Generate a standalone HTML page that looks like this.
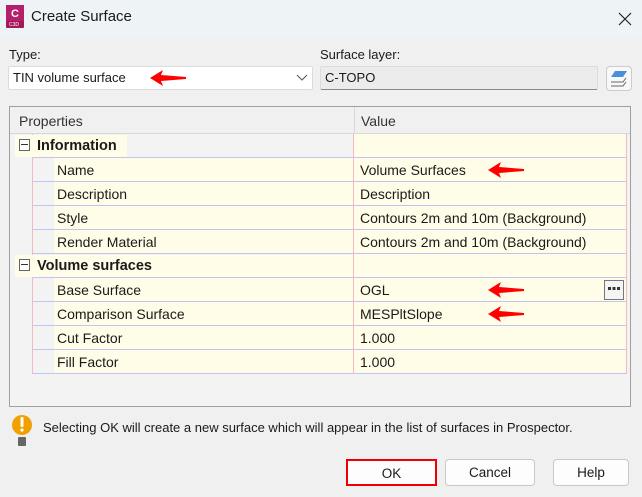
<!DOCTYPE html>
<html><head><meta charset="utf-8"><style>
*{margin:0;padding:0;box-sizing:border-box}
body{width:642px;height:497px;background:#f0f0f0;font-family:"Liberation Sans",sans-serif;font-size:14px;color:#1a1a1a;position:relative;overflow:hidden}
.a{position:absolute}
.title{left:0;top:0;width:642px;height:38px;background:#eef3f6}
.grid{left:9px;top:106px;width:622px;height:301px;border:1px solid #a0a0a0;background:#f3f3f3}
.row{position:absolute;left:0;height:24px;width:620px}
.t{position:absolute;top:4px;white-space:nowrap}
.arrow{position:absolute;width:36px;height:16px}
.btn{position:absolute;top:459px;height:27px;background:#fdfdfd;border:1px solid #c8c8c8;border-radius:4px;text-align:center;line-height:25px;font-size:13.5px}
</style></head><body>
<div class="a title"></div>
<svg class="a" style="left:6px;top:5px" width="18" height="23"><rect x="0" y="0" width="18" height="23" rx="1" fill="#a3195b"/><rect x="0" y="0" width="18" height="16" fill="#b5206a"/><text x="5" y="12" font-family="Liberation Sans" font-weight="bold" font-size="11" fill="#fff">C</text><text x="3" y="21" font-family="Liberation Sans" font-size="5" fill="#fff">C3D</text></svg>
<div class="a" style="left:31px;top:8px;font-size:15px">Create Surface</div>
<svg class="a" style="left:618px;top:12px" width="14" height="14"><path d="M1 1L13 13M13 1L1 13" stroke="#222" stroke-width="1.2"/></svg>
<div class="a" style="left:9px;top:47px;font-size:13px">Type:</div>
<div class="a" style="left:320px;top:47px;font-size:13px">Surface layer:</div>
<div class="a" style="left:8px;top:66px;width:305px;height:24px;background:#fff;border:1px solid #dcdcdc;border-radius:2px"></div>
<div class="a" style="left:13px;top:70px;font-size:13px">TIN volume surface</div>
<svg class="a" style="left:296px;top:74px" width="12" height="8"><path d="M1 1L6 6L11 1" fill="none" stroke="#555" stroke-width="1"/></svg>
<svg class="arrow" style="left:150px;top:70px"><path d="M0 8L13 0L11 5L36 7L36 9L11 11L13 16Z" fill="#f00"/></svg>
<div class="a" style="left:320px;top:66px;width:278px;height:24px;background:#ececec;border:1px solid #dcdcdc;border-bottom:1px solid #888;border-radius:2px"></div>
<div class="a" style="left:325px;top:70px;font-size:13px">C-TOPO</div>
<div class="a" style="left:606px;top:66px;width:26px;height:25px;background:#f8f8f8;border:1px solid #ccc;border-radius:4px"></div>
<svg class="a" style="left:609px;top:69px" width="20" height="20"><path d="M6 2H18L14 8H2Z" fill="#4a90d9"/><path d="M17 9L14 13H2" fill="none" stroke="#666" stroke-width="1"/><path d="M17 13L14 17H2" fill="none" stroke="#666" stroke-width="1"/></svg>

<div class="a grid">
<div class="row" style="top:0;height:27px;background:#f0f0f0;border-bottom:1px solid #d8d8d8"><div class="t" style="left:9px;top:6px;color:#333">Properties</div><div class="a" style="left:344px;top:0;width:1px;height:27px;background:#d8d8d8"></div><div class="t" style="left:351px;top:6px;color:#333">Value</div></div>
</div>

<div class="a" style="left:32px;top:134px;width:1px;height:240px;background:#f4b8c0"></div>
<div class="a" style="left:626px;top:134px;width:1px;height:240px;background:#f4b8c0"></div>

<div class="a" style="left:15px;top:135px;width:112px;height:22px;background:#fffde8"></div>
<div class="a" style="left:354px;top:134px;width:272px;height:24px;background:#fffde8"></div>
<div class="a" style="left:19px;top:139px;width:11px;height:12px;border:1px solid #666;background:#fff"></div><div class="a" style="left:21px;top:144px;width:7px;height:1px;background:#333"></div>
<div class="a" style="left:37px;top:138px;font-weight:bold;font-size:14.5px">Information</div>

<div class="a" style="left:54px;top:158px;width:572px;height:96px;background:#fffde8"></div>
<div class="a" style="left:33px;top:157px;width:593px;height:1px;background:#c4c4f4"></div>
<div class="a" style="left:33px;top:181px;width:593px;height:1px;background:#c4c4f4"></div>
<div class="a" style="left:33px;top:205px;width:593px;height:1px;background:#c4c4f4"></div>
<div class="a" style="left:33px;top:229px;width:593px;height:1px;background:#c4c4f4"></div>
<div class="a" style="left:33px;top:253px;width:593px;height:1px;background:#c4c4f4"></div>
<div class="a" style="left:353px;top:134px;width:1px;height:240px;background:#f4b8c0"></div>
<div class="a" style="left:57px;top:162px">Name</div><div class="a" style="left:360px;top:162px">Volume Surfaces</div>
<div class="a" style="left:57px;top:186px">Description</div><div class="a" style="left:360px;top:186px">Description</div>
<div class="a" style="left:57px;top:210px">Style</div><div class="a" style="left:360px;top:210px">Contours 2m and 10m (Background)</div>
<div class="a" style="left:57px;top:234px">Render Material</div><div class="a" style="left:360px;top:234px">Contours 2m and 10m (Background)</div>

<div class="a" style="left:15px;top:255px;width:338px;height:22px;background:#fffde8"></div>
<div class="a" style="left:354px;top:254px;width:272px;height:24px;background:#fffde8"></div>
<div class="a" style="left:19px;top:259px;width:11px;height:12px;border:1px solid #666;background:#fff"></div><div class="a" style="left:21px;top:264px;width:7px;height:1px;background:#333"></div>
<div class="a" style="left:37px;top:258px;font-weight:bold;font-size:14.5px">Volume surfaces</div>
<div class="a" style="left:54px;top:278px;width:572px;height:96px;background:#fffde8"></div>
<div class="a" style="left:33px;top:277px;width:593px;height:1px;background:#c4c4f4"></div>
<div class="a" style="left:33px;top:301px;width:593px;height:1px;background:#c4c4f4"></div>
<div class="a" style="left:33px;top:325px;width:593px;height:1px;background:#c4c4f4"></div>
<div class="a" style="left:33px;top:349px;width:593px;height:1px;background:#c4c4f4"></div>
<div class="a" style="left:33px;top:373px;width:593px;height:1px;background:#c4c4f4"></div>
<div class="a" style="left:353px;top:134px;width:1px;height:240px;background:#f4b8c0"></div>
<div class="a" style="left:57px;top:282px">Base Surface</div><div class="a" style="left:360px;top:282px">OGL</div>
<div class="a" style="left:57px;top:306px">Comparison Surface</div><div class="a" style="left:360px;top:306px">MESPltSlope</div>
<div class="a" style="left:57px;top:330px">Cut Factor</div><div class="a" style="left:360px;top:330px">1.000</div>
<div class="a" style="left:57px;top:354px">Fill Factor</div><div class="a" style="left:360px;top:354px">1.000</div>
<div class="a" style="left:604px;top:280px;width:20px;height:20px;border:1px solid #777;background:#f4f4f4"></div>
<svg class="a" style="left:607px;top:287px" width="14" height="4"><rect x="1" y="0" width="3" height="3" fill="#333"/><rect x="5.5" y="0" width="3" height="3" fill="#333"/><rect x="10" y="0" width="3" height="3" fill="#333"/></svg>

<svg class="arrow" style="left:488px;top:162px"><path d="M0 8L13 0L11 5L36 7L36 9L11 11L13 16Z" fill="#f00"/></svg>
<svg class="arrow" style="left:488px;top:282px"><path d="M0 8L13 0L11 5L36 7L36 9L11 11L13 16Z" fill="#f00"/></svg>
<svg class="arrow" style="left:488px;top:306px"><path d="M0 8L13 0L11 5L36 7L36 9L11 11L13 16Z" fill="#f00"/></svg>

<svg class="a" style="left:12px;top:413px" width="22" height="38"><circle cx="10" cy="12" r="10" fill="#f0a000"/><rect x="8.5" y="4" width="3" height="10" rx="1" fill="#fff"/><circle cx="10" cy="17" r="1.6" fill="#fff"/><rect x="6" y="24" width="8" height="9" rx="1" fill="#666"/></svg>
<div class="a" style="left:43px;top:420px;font-size:13px">Selecting OK will create a new surface which will appear in the list of surfaces in Prospector.</div>

<div class="btn" style="left:346px;width:91px;border:2px solid #e00;border-radius:0">OK</div>
<div class="btn" style="left:445px;width:90px">Cancel</div>
<div class="btn" style="left:553px;width:76px">Help</div>
</body></html>
